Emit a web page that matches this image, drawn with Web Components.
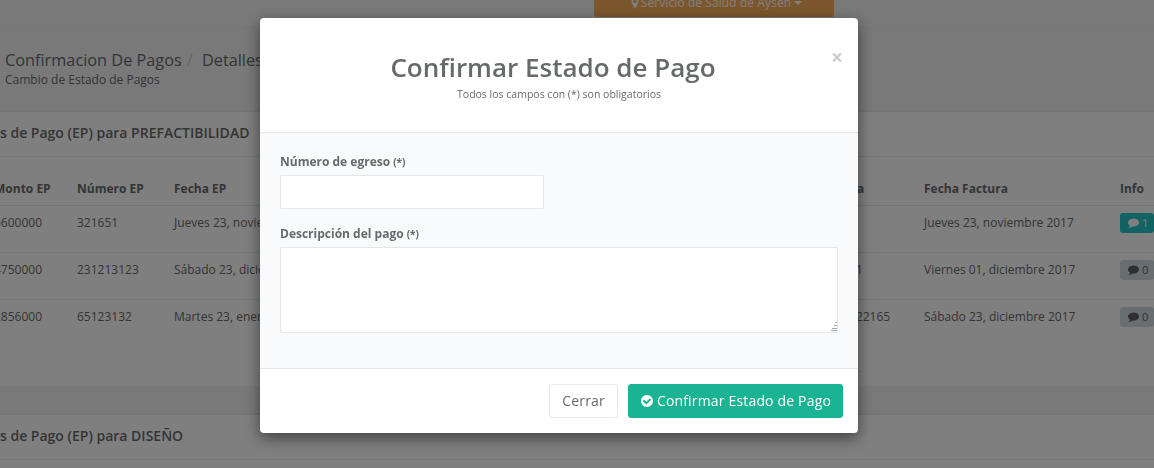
<!DOCTYPE html>
<html lang="es">
<head>
<meta charset="utf-8">
<title>Confirmar Estado de Pago</title>
<style>
  html, body { margin: 0; height: 100%; overflow: hidden; }
  body { font-family: 'Open Sans', 'Liberation Sans', sans-serif; font-size: 12px; color: #676a6c; background: #f3f3f4; }
</style>
</head>
<body>
<top-nav>Servicio de Salud de Aysen</top-nav>
<page-heading section="Confirmacion De Pagos" current="Detalles" sub="Cambio de Estado de Pagos"></page-heading>
<ep-panel heading="s de Pago (EP) para PREFACTIBILIDAD"><ep-table></ep-table></ep-panel>
<ep-panel heading="s de Pago (EP) para DISEÑO"></ep-panel>
<confirm-modal></confirm-modal>

<script>
const FA = {
  marker: 'M1152 640q0-106-75-181t-181-75-181 75-75 181 75 181 181 75 181-75 75-181zm256 0q0 109-33 179l-364 774q-16 33-47.500 52t-67.500 19-67.500-19-46.500-52l-365-774q-33-70-33-179 0-212 150-362t362-150 362 150 150 362z',
  check: 'M1412 734q0-28-18-46l-91-90q-19-19-45-19t-45 19l-408 407-226-226q-19-19-45-19t-45 19l-91 90q-18 18-18 46 0 27 18 45l362 362q19 19 45 19 27 0 46-19l543-543q18-18 18-45zm252 162q0 209-103 385.5t-279.5 279.500-385.500 103-385.500-103-279.500-279.500-103-385.500 103-385.500 279.500-279.500 385.500-103 385.500 103 279.500 279.500 103 385.500z',
  comment: 'M1792 896q0 174-120 321.500t-326 233-450 85.500q-70 0-145-8-198 175-460 242-49 14-114 22-17 2-30.500-9t-17.500-29v-1q-3-4-.5-12t2-10 4.500-9.500l6-9 7-8.500 8-9q7-8 31-34.500t34.500-38 31-39.500 32.500-51 27-59 26-76q-157-89-247.500-220t-90.500-281q0-130 71-248.500t191-204.500 286-136.500 348-50.500q244 0 450 85.500t326 233 120 321.500z'
};
const icon = (name, size) => `<svg width="${size}" height="${size}" viewBox="0 0 1792 1792" fill="currentColor" aria-hidden="true"><path d="${FA[name]}"/></svg>`;

class TopNav extends HTMLElement {
  constructor() {
    super();
    this.attachShadow({ mode: 'open' });
    this.shadowRoot.innerHTML = `
      <style>
        :host { display: block; height: 27px; border-bottom: 1px solid #e7eaec; padding-left: 594px; }
        .btn { width: 240px; height: 17px; background: #f8ac59; color: #fff; border-radius: 0 0 3px 3px; overflow: hidden; display: flex; justify-content: center; align-items: flex-start; font-size: 12px; line-height: 17px; white-space: nowrap; }
        .btn span { margin: -6px 0 0 3px; display: flex; align-items: center; letter-spacing: .08px; }
        svg { flex: none; }
        i { width: 0; height: 0; border: 4px solid transparent; border-top-color: #fff; border-bottom: 0; margin-left: 3px; }
      </style>
      <div class="btn"><span>${icon('marker', 12)}<slot></slot><i></i></span></div>`;
  }
}

class PageHeading extends HTMLElement {
  constructor() {
    super();
    this.attachShadow({ mode: 'open' });
    this.shadowRoot.innerHTML = `
      <style>
        :host { display: block; height: 82px; box-sizing: border-box; padding: 21px 0 0 5px; white-space: nowrap; }
        .crumb { font-size: 16.3px; line-height: 22px; }
        .sep { color: #ccc; padding: 0 5px; }
        .sub { font-size: 12px; line-height: 17px; }
      </style>
      <div class="crumb">${this.getAttribute('section')}<span class="sep">/</span> ${this.getAttribute('current')}</div>
      <div class="sub">${this.getAttribute('sub')}</div>`;
  }
}

class EpPanel extends HTMLElement {
  constructor() {
    super();
    this.attachShadow({ mode: 'open' });
    this.shadowRoot.innerHTML = `
      <style>
        :host { display: block; margin-bottom: 27px; background: #fff; border-top: 2px solid #e7eaec; }
        h5 { margin: 0; height: 45px; line-height: 42px; box-sizing: border-box; border-bottom: 1px solid #e7eaec; font-size: 14px; font-weight: 600; white-space: nowrap; }
        .body { min-height: 229px; }
      </style>
      <h5>${this.getAttribute('heading')}</h5>
      <div class="body"><slot></slot></div>`;
  }
}

const HEADERS = ['Monto EP', 'Número EP', 'Fecha EP', '', '', '', 'Nº Factura', 'Fecha Factura', 'Info'];
const ROWS = [
  ['5600000', '321651', 'Jueves 23, noviembre 2017', '', '', '', '1234', 'Jueves 23, noviembre 2017', 1],
  ['4750000', '231213123', 'Sábado 23, diciembre 2017', '', '', '', '123123111', 'Viernes 01, diciembre 2017', 0],
  ['2856000', '65123132', 'Martes 23, enero 2018', '', '', '', '1231231222165', 'Sábado 23, diciembre 2017', 0]
];
const WIDTHS = [83, 97, 200, 150, 150, 127, 123, 196, 80];

class EpTable extends HTMLElement {
  constructor() {
    super();
    this.attachShadow({ mode: 'open' });
    const head = HEADERS.map(h => `<th>${h}</th>`).join('');
    const body = ROWS.map(r => '<tr>' + r.map((c, i) => i === 8
      ? `<td><span class="badge ${c ? 'on' : ''}">${icon('comment', 11)} ${c}</span></td>`
      : `<td>${c}</td>`).join('') + '</tr>').join('');
    this.shadowRoot.innerHTML = `
      <style>
        :host { display: block; margin-left: -14px; }
        table { table-layout: fixed; width: ${WIDTHS.reduce((a, b) => a + b, 0)}px; border-collapse: collapse; white-space: nowrap; }
        th { height: 48px; padding: 23px 8px 0; vertical-align: top; text-align: left; font-size: 12px; line-height: 17px; font-weight: 700; border-bottom: 1px solid #e7eaec; box-sizing: border-box; }
        td { height: 47px; padding: 8px 8px 0; vertical-align: top; line-height: 17px; border-bottom: 1px solid #e7eaec; box-sizing: border-box; overflow: hidden; }
        tr:last-child td { border-bottom: 0; }
        .badge { display: inline-flex; align-items: center; gap: 3px; width: 34px; height: 20px; padding-left: 8px; box-sizing: border-box; border-radius: 3px; background: #d1dade; color: #5e5e5e; font-size: 11px; margin-top: -1px; vertical-align: top; }
        .badge.on { background: #23c6c8; color: #fff; }
      </style>
      <table>
        <colgroup>${WIDTHS.map(w => `<col style="width:${w}px">`).join('')}</colgroup>
        <thead><tr>${head}</tr></thead>
        <tbody>${body}</tbody>
      </table>`;
  }
}

class FormField extends HTMLElement {
  constructor() {
    super();
    this.attachShadow({ mode: 'open' });
    const multi = this.hasAttribute('multiline');
    this.shadowRoot.innerHTML = `
      <style>
        :host { display: block; margin-bottom: 16px; }
        label { display: block; height: 17px; margin-bottom: 5px; font-size: 12px; line-height: 17px; font-weight: 700; }
        small { font-size: 10px; font-weight: 700; }
        .wrap { position: relative; }
        input, textarea { display: block; box-sizing: border-box; margin: 0; padding: 6px 12px; background: #fff; border: 1px solid #e5e6e7; border-radius: 1px; outline: 0; font: inherit; color: inherit; }
        input { width: 264px; height: 34px; }
        textarea { width: 558px; height: 86px; resize: none; }
        /* old style chrome resize grip */
        svg { position: absolute; right: 1px; bottom: 1px; }
      </style>
      <label>${this.getAttribute('label')} <small>(*)</small></label>
      ${multi ? `<div class="wrap"><textarea></textarea>
        <svg width="6" height="10" fill="#a3a3a3" aria-hidden="true"><rect x="4" width="2" height="1"/><rect x="3" y="3" width="3" height="1"/><rect x="1" y="6" width="5" height="1"/><rect y="8" width="6" height="1"/></svg></div>` : '<input type="text">'}`;
  }
}

class ConfirmModal extends HTMLElement {
  constructor() {
    super();
    this.attachShadow({ mode: 'open' });
    this.shadowRoot.innerHTML = `
      <style>
        :host { position: fixed; inset: 0; display: block; background: rgba(0, 0, 0, .5); }
        .dialog { width: 598px; margin: 18px 0 0 260px; background: #fff; border-radius: 4px; box-shadow: 0 5px 15px rgba(0, 0, 0, .5); overflow: hidden; }
        header { height: 115px; box-sizing: border-box; padding: 31px 15px 0; text-align: center; border-bottom: 1px solid #e5e5e5; }
        .close { float: right; margin-top: -2px; padding: 0; border: 0; background: none; font: 700 21px/1 'Open Sans', sans-serif; color: #000; opacity: .2; }
        h4 { margin: 0; font-size: 26px; line-height: 36px; font-weight: 600; }
        header small { display: block; font-size: 10.5px; line-height: 14px; margin-top: 2px; }
        main { padding: 20px 20px 20px; background: #f8fafb; height: 235px; box-sizing: border-box; }
        footer { height: 65px; box-sizing: border-box; border-top: 1px solid #e5e5e5; padding: 15px; display: flex; justify-content: flex-end; gap: 10px; }
        button.act { height: 34px; box-sizing: border-box; border-radius: 3px; font: 14px/20px 'Open Sans', sans-serif; letter-spacing: .17px; padding: 0 12px; display: inline-flex; align-items: center; gap: 3px; }
        .plain { background: #fff; border: 1px solid #e7eaec; color: #676a6c; }
        button.primary { background: #1ab394; border: 1px solid #1ab394; color: #fff; padding: 0 11px; }
      </style>
      <div class="dialog" role="dialog">
        <header>
          <button class="close">×</button>
          <h4>Confirmar Estado de Pago</h4>
          <small>Todos los campos con (*) son obligatorios</small>
        </header>
        <main>
          <form-field label="Número de egreso"></form-field>
          <form-field label="Descripción del pago" multiline></form-field>
        </main>
        <footer>
          <button class="act plain">Cerrar</button>
          <button class="act primary">${icon('check', 14)}Confirmar Estado de Pago</button>
        </footer>
      </div>`;
  }
}

customElements.define('top-nav', TopNav);
customElements.define('page-heading', PageHeading);
customElements.define('ep-panel', EpPanel);
customElements.define('ep-table', EpTable);
customElements.define('form-field', FormField);
customElements.define('confirm-modal', ConfirmModal);
</script>
</body>
</html>
